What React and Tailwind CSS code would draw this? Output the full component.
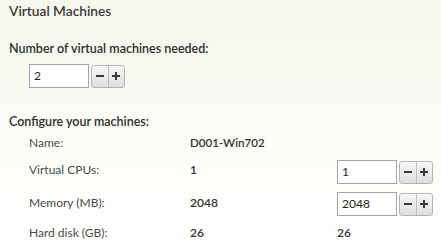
import React from "react";

function Spinner({ value }) {
  return (
    <div className="flex items-center h-[24px]">
      <div className="w-[60px] h-[24px] border border-[#a3a3a3] bg-white flex items-center pl-[4px] text-[12px] text-[#222]">
        {value}
      </div>
      <div className="ml-[2px] flex h-[23px] w-[34px] rounded-[3px] border border-[#b4b4b4] bg-gradient-to-b from-[#f7f7f7] to-[#dedede] overflow-hidden">
        <div className="flex-1 flex items-center justify-center border-r border-[#bdbdbd]">
          <div className="w-[8px] h-[2px] bg-[#3a3a3a]" />
        </div>
        <div className="flex-1 flex items-center justify-center relative">
          <div className="w-[8px] h-[2px] bg-[#3a3a3a]" />
          <div className="absolute w-[2px] h-[8px] bg-[#3a3a3a]" />
        </div>
      </div>
    </div>
  );
}

export default function App() {
  const font = { fontFamily: 'Lato, "Noto Sans", sans-serif' };
  return (
    <div
      className="w-[441px] h-[250px] overflow-hidden bg-gradient-to-b from-[#f6f8ec] via-[#fbfcf6] to-white text-[#333]"
      style={font}
    >
      <div className="pl-[9px] pt-[2px]">
        <div className="h-[18px] leading-[18px] text-[13.7px] font-semibold text-[#3a3a3a]">Virtual Machines</div>
        <div className="mt-[20px] h-[18px] leading-[18px] text-[12.5px] font-semibold text-[#2e2e2e]">
          Number of virtual machines needed:
        </div>
        <div className="mt-[6px] pl-[20px]">
          <Spinner value="2" />
        </div>
        <div className="mt-[25px] h-[18px] leading-[18px] text-[12.5px] font-semibold text-[#2e2e2e]">
          Configure your machines:
        </div>
        <div className="pl-[20px] text-[12px] text-[#4a4a4a]">
          <div className="mt-[2px] flex items-center h-[20px]">
            <div className="w-[161px]">Name:</div>
            <div className="font-semibold text-[#333] text-[11.6px]">D001-Win702</div>
          </div>
          <div className="mt-[7px] flex items-center h-[24px]">
            <div className="w-[161px] -mt-[4px]">Virtual CPUs:</div>
            <div className="w-[147px] -mt-[4px] font-semibold text-[#333]">1</div>
            <Spinner value="1" />
          </div>
          <div className="mt-[8px] flex items-center h-[24px]">
            <div className="w-[161px] -mt-[3px]">Memory (MB):</div>
            <div className="w-[147px] -mt-[3px] font-semibold text-[#333]">2048</div>
            <Spinner value="2048" />
          </div>
          <div className="mt-[7px] flex items-center h-[20px]">
            <div className="w-[161px]">Hard disk (GB):</div>
            <div className="w-[147px] font-semibold text-[#333]">26</div>
            <div className="font-semibold text-[#333]">26</div>
          </div>
        </div>
      </div>
    </div>
  );
}
